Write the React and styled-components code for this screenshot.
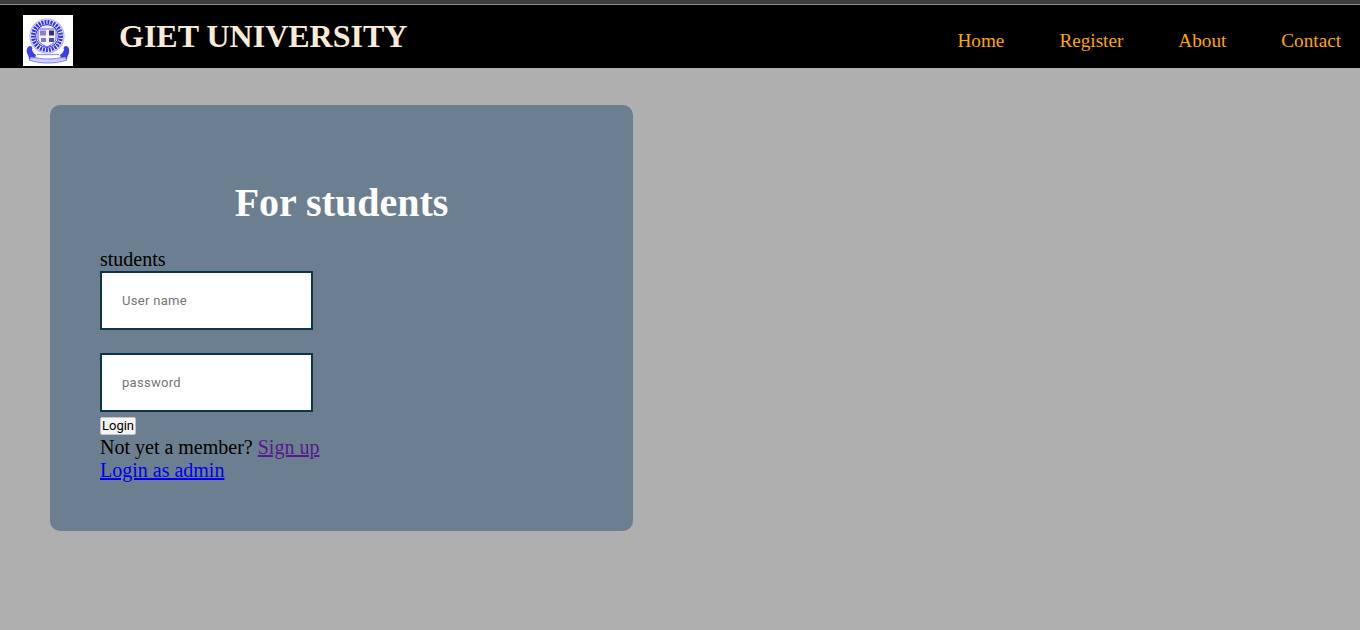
import React from "react";
import styled, { createGlobalStyle } from "styled-components";

const Global = createGlobalStyle`
  html, body { margin: 0; padding: 0; }
  body { background: #afafaf; font-family: "Liberation Serif", "Times New Roman", serif; color: #000; }
`;
const Page = styled.div`
  width: 1360px;
  height: 630px;
  overflow: hidden;
  background: #afafaf;
`;
const WindowStrip = styled.div`
  height: 4px;
  background: #3c3c3c;
  border-bottom: 1px solid #8a8a8a;
`;
const Header = styled.header`
  height: 63px;
  background: #000;
  display: flex;
  justify-content: space-between;
`;
const Brand = styled.div`
  display: flex;
  align-items: flex-start;
  padding: 10px 0 0 23px;
`;
const LogoBox = styled.div`
  width: 50px;
  height: 51px;
  background: #fff;
  svg { display: block; filter: blur(0.6px); }
`;
const Title = styled.h1`
  margin: 0 0 0 46px;
  font-size: 32px;
  line-height: 37px;
  padding-top: 3px;
  font-weight: 700;
  color: #faebd7;
`;
const Nav = styled.nav`
  display: flex;
  gap: 55px;
  padding: 25px 19px 0 0;
`;
const NavLink = styled.a`
  font-size: 19.2px;
  line-height: 22px;
  color: #ffa500;
  text-decoration: none;
`;
const Main = styled.main`
  padding: 37px 0 0 50px;
`;
const Card = styled.section`
  box-sizing: border-box;
  width: 583px;
  height: 426px;
  padding: 75px 50px 0;
  background: #6c7f90;
  border-radius: 10px;
`;
const Heading = styled.h2`
  margin: 0 0 25px;
  font-size: 40px;
  line-height: 46px;
  font-weight: 700;
  color: #fff;
  text-align: center;
`;
const Form = styled.form`
  display: flex;
  flex-direction: column;
  align-items: flex-start;
  font-size: 20px;
  line-height: 23px;
`;
const Label = styled.label`
  display: block;
  height: 20px;
  line-height: 17px;
`;
const Field = styled.input`
  box-sizing: border-box;
  width: 213px;
  height: 59px;
  margin-bottom: ${(p) => p.$gap}px;
  padding: 0 20px;
  background: #fff;
  border: 2px solid #0d3448;
  border-radius: 0;
  outline: none;
  font-family: Roboto, sans-serif;
  font-size: 13px;
  letter-spacing: 0.3px;
  &::placeholder { color: #757575; opacity: 1; }
`;
const Submit = styled.button`
  box-sizing: border-box;
  width: 36px;
  height: 18px;
  padding: 0;
  background: #f4f4f4;
  border: 1px solid #c4c4c4;
  border-radius: 2px;
  font-family: Roboto, sans-serif;
  font-size: 13px;
  line-height: 14px;
  color: #000;
`;
const Line = styled.div`
  height: 23px;
  line-height: 25px;
  white-space: nowrap;
`;
const Visited = styled.a`
  color: #551a8b;
  text-decoration: underline;
`;
const Plain = styled.a`
  color: #0000ee;
  text-decoration: underline;
`;

const Logo = () => (
  <svg width="50" height="51" viewBox="0 0 50 51" aria-hidden="true">
    <circle cx="24" cy="21" r="17" fill="none" stroke="#b4b4fa" strokeWidth="1.2" />
    <circle cx="24" cy="21" r="14" fill="none" stroke="#3030f0" strokeWidth="4" strokeDasharray="2 1" />
    <circle cx="24" cy="21" r="11.4" fill="#eeeeff" stroke="#1c1ce8" strokeWidth="1" />
    <path d="M15 14h18v9c0 5-5 7-9 9-4-2-9-4-9-9z" fill="#f4f4ff" stroke="#5a5af0" strokeWidth="1" />
    <rect x="17" y="15.5" width="6" height="5" fill="#8484c8" />
    <rect x="26" y="15.5" width="5" height="5" fill="#30308c" />
    <rect x="18" y="23" width="5" height="4" fill="#7a7ad0" />
    <rect x="26" y="23" width="5" height="4" fill="#4a4aa8" />
    <path d="M4 38c-1-4 1-7 3-7s3 2 2 4c1 2 2 4 4 5l-1 4H6c0-2-1-4-2-6z" fill="#3c3cf0" />
    <path d="M46 38c1-4-1-7-3-7s-3 2-2 4c-1 2-2 4-4 5l1 4h6c0-2 1-4 2-6z" fill="#3c3cf0" />
    <path d="M8 42c6 1 11 2 17 2s11-1 17-2l2 3c-6 2-12 3-19 3s-13-1-19-3z" fill="#cfcffc" stroke="#6a6af2" strokeWidth="0.8" />
    <path d="M14 39.5h22" stroke="#9a9af6" strokeWidth="1.2" />
  </svg>
);

export default function App() {
  return (
    <Page>
      <Global />
      <WindowStrip />
      <Header>
        <Brand>
          <LogoBox><Logo /></LogoBox>
          <Title>GIET UNIVERSITY</Title>
        </Brand>
        <Nav>
          <NavLink href="#">Home</NavLink>
          <NavLink href="#">Register</NavLink>
          <NavLink href="#">About</NavLink>
          <NavLink href="#">Contact</NavLink>
        </Nav>
      </Header>
      <Main>
        <Card>
          <Heading>For students</Heading>
          <Form onSubmit={(e) => e.preventDefault()}>
            <Label>students</Label>
            <Field $gap={23} placeholder="User name" />
            <Field $gap={5} placeholder="password" type="password" />
            <Submit type="submit">Login</Submit>
            <Line>Not yet a member? <Visited href="#">Sign up</Visited></Line>
            <Line><Plain href="#">Login as admin</Plain></Line>
          </Form>
        </Card>
      </Main>
    </Page>
  );
}
